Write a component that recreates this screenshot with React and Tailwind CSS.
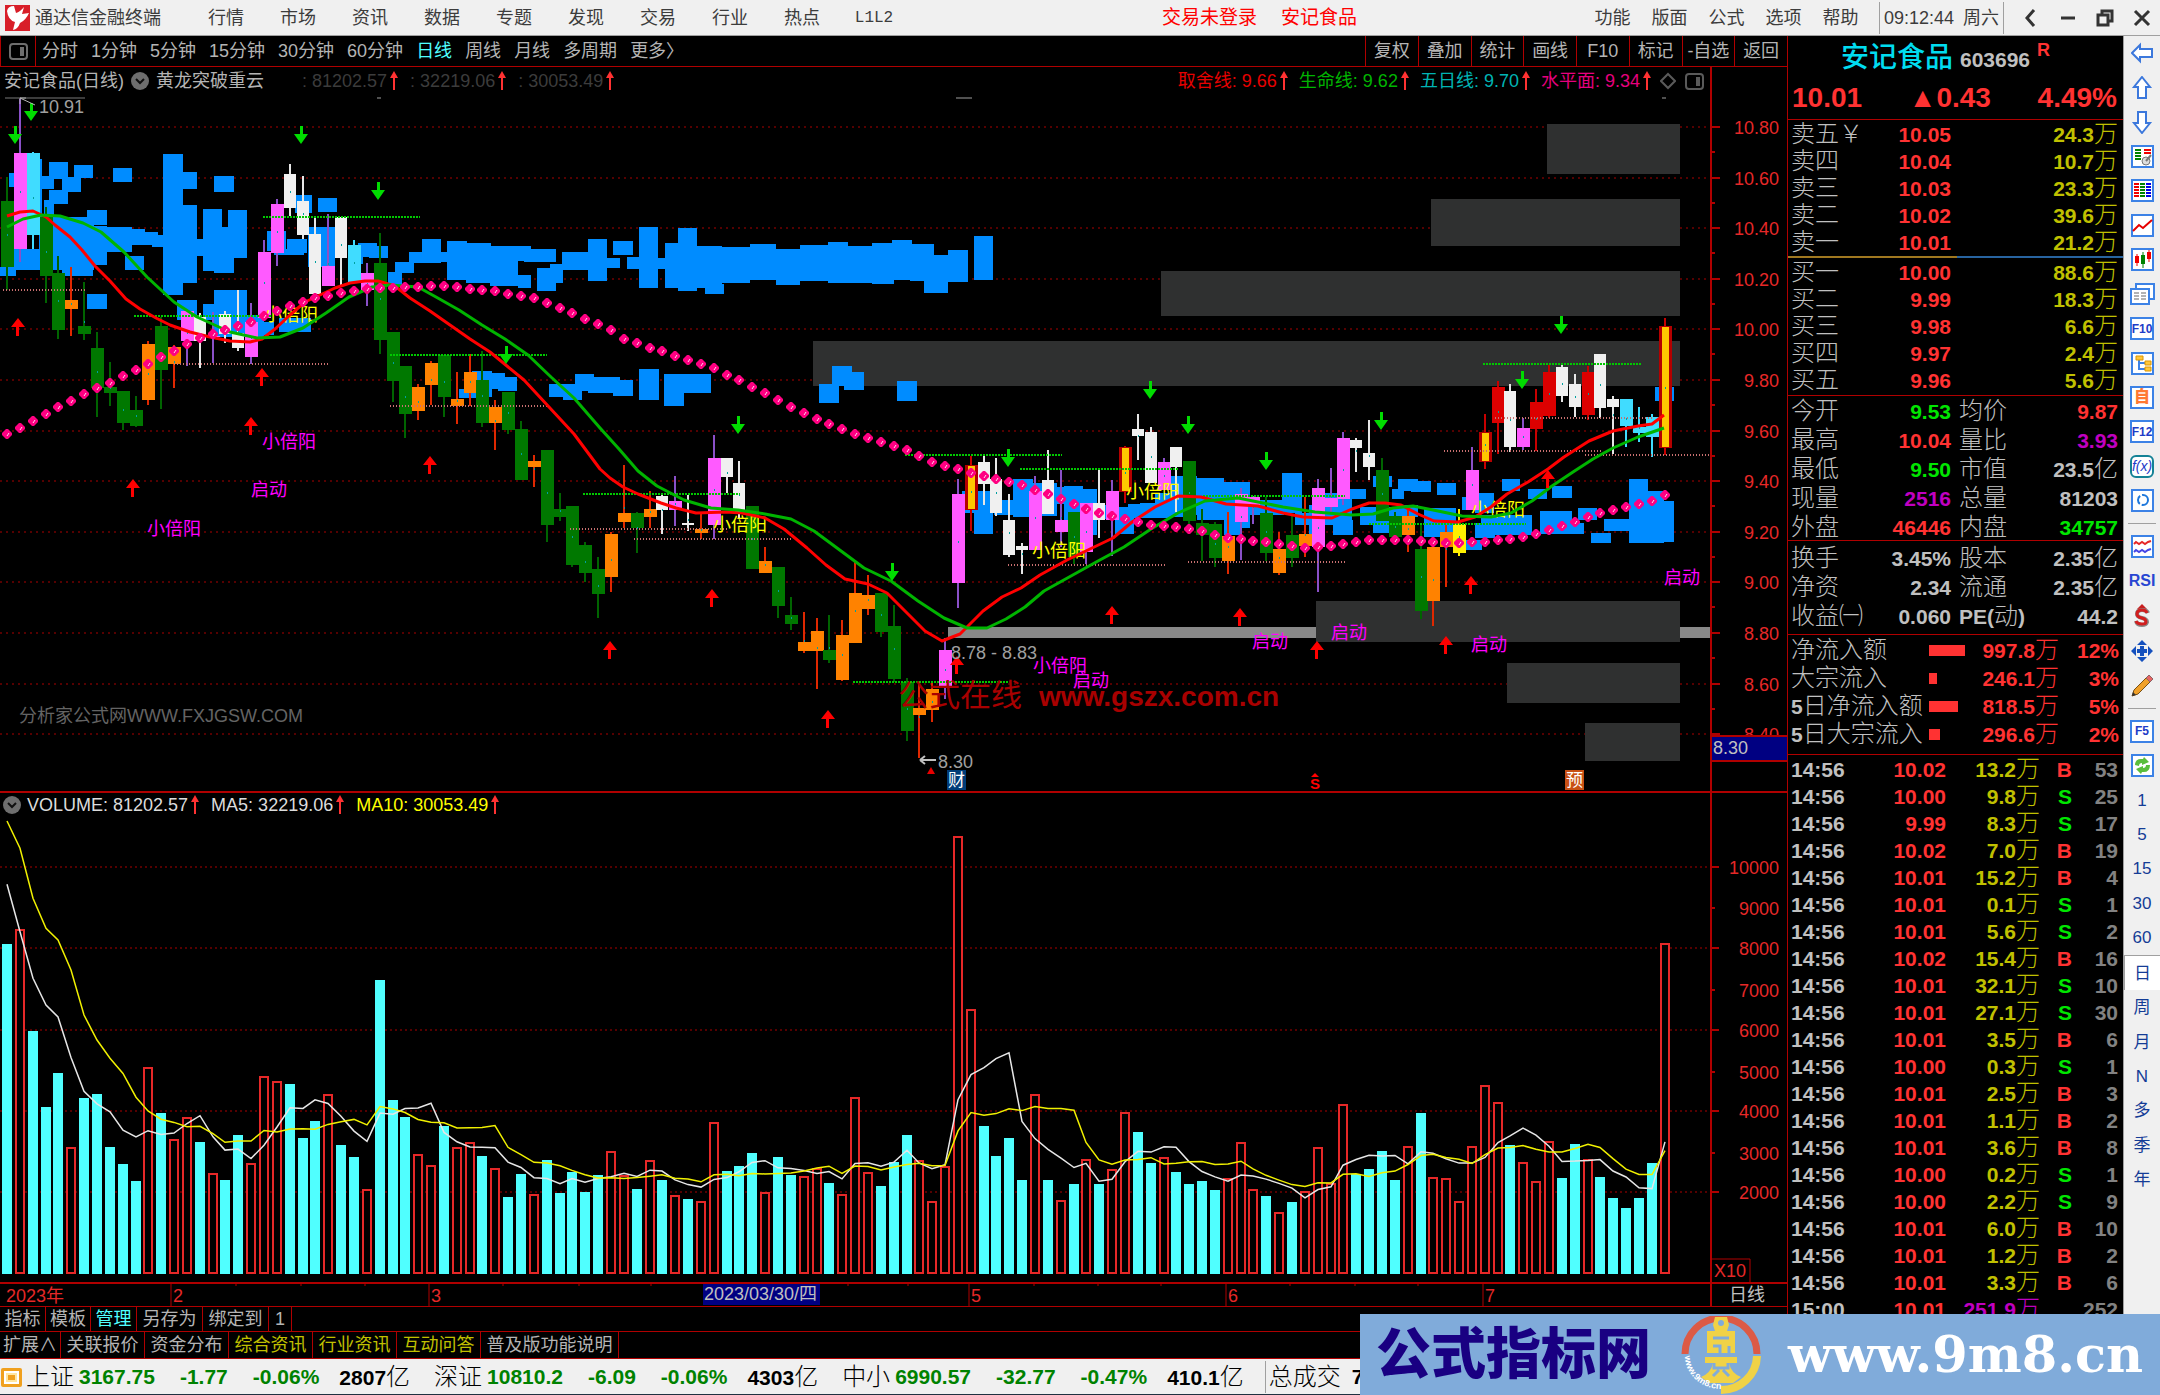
import React from "react";

const MENU = ["行情", "市场", "资讯", "数据", "专题", "发现", "交易", "行业", "热点", "L1L2"];
const MENU_RIGHT = ["功能", "版面", "公式", "选项", "帮助"];
const PERIODS = ["分时", "1分钟", "5分钟", "15分钟", "30分钟", "60分钟", "日线", "周线", "月线", "多周期", "更多〉"];
const TOOLS = ["复权", "叠加", "统计", "画线", "F10", "标记", "-自选", "返回"];

const SELL = [
  ["卖五￥", "10.05", "24.3万"],
  ["卖四", "10.04", "10.7万"],
  ["卖三", "10.03", "23.3万"],
  ["卖二", "10.02", "39.6万"],
  ["卖一", "10.01", "21.2万"],
];
const BUY = [
  ["买一", "10.00", "88.6万"],
  ["买二", "9.99", "18.3万"],
  ["买三", "9.98", "6.6万"],
  ["买四", "9.97", "2.4万"],
  ["买五", "9.96", "5.6万"],
];

const R = "text-[#ff3232]";
const G = "text-[#00e600]";
const M = "text-[#c000c0]";
const W = "text-[#c0c0c0]";

const STATS_A = [
  ["今开", "9.53", G, "均价", "9.87", R],
  ["最高", "10.04", R, "量比", "3.93", M],
  ["最低", "9.50", G, "市值", "23.5亿", W],
  ["现量", "2516", M, "总量", "81203", W],
  ["外盘", "46446", R, "内盘", "34757", G],
];
const STATS_B = [
  ["换手", "3.45%", W, "股本", "2.35亿", W],
  ["净资", "2.34", W, "流通", "2.35亿", W],
  ["收益㈠", "0.060", W, "PE(动)", "44.2", W],
];
const FLOWS = [
  ["净流入额", 36, "997.8万", "12%"],
  ["大宗流入", 8, "246.1万", "3%"],
  ["5日净流入额", 29, "818.5万", "5%"],
  ["5日大宗流入", 11, "296.6万", "2%"],
];
const TICKS = [
  ["14:56", "10.02", "13.2万", "B", 53],
  ["14:56", "10.00", "9.8万", "S", 25],
  ["14:56", "9.99", "8.3万", "S", 17],
  ["14:56", "10.02", "7.0万", "B", 19],
  ["14:56", "10.01", "15.2万", "B", 4],
  ["14:56", "10.01", "0.1万", "S", 1],
  ["14:56", "10.01", "5.6万", "S", 2],
  ["14:56", "10.02", "15.4万", "B", 16],
  ["14:56", "10.01", "32.1万", "S", 10],
  ["14:56", "10.01", "27.1万", "S", 30],
  ["14:56", "10.01", "3.5万", "B", 6],
  ["14:56", "10.00", "0.3万", "S", 1],
  ["14:56", "10.01", "2.5万", "B", 3],
  ["14:56", "10.01", "1.1万", "B", 2],
  ["14:56", "10.01", "3.6万", "B", 8],
  ["14:56", "10.00", "0.2万", "S", 1],
  ["14:56", "10.00", "2.2万", "S", 9],
  ["14:56", "10.01", "6.0万", "B", 10],
  ["14:56", "10.01", "1.2万", "B", 2],
  ["14:56", "10.01", "3.3万", "B", 6],
  ["15:00", "10.01", "251.9万", "", 252],
];

// kind, high, body top, body bottom, low
const CANDLES = [
  ["g", 177, 201, 267, 290], ["m", 98, 153, 249, 262], ["c", 152, 153, 235, 249], ["g", 207, 217, 276, 303],
  ["g", 256, 273, 330, 339], ["o", 267, 300, 309, 336], ["g", 282, 326, 334, 340], ["g", 332, 348, 388, 417],
  ["g", 362, 387, 393, 406], ["g", 391, 391, 423, 430], ["g", 396, 410, 426, 427], ["o", 341, 344, 400, 405],
  ["g", 317, 326, 370, 409], ["o", 345, 347, 364, 388], ["m", 311, 311, 341, 366], ["w", 313, 317, 341, 368],
  ["m", 312, 336, 337, 363], ["w", 311, 314, 334, 343], ["w", 290, 333, 348, 351], ["m", 303, 322, 357, 364],
  ["m", 240, 252, 318, 318], ["m", 199, 204, 253, 266], ["w", 164, 174, 208, 216], ["w", 176, 201, 235, 239],
  ["w", 217, 234, 294, 300], ["m", 214, 266, 286, 286], ["w", 217, 217, 258, 285], ["c", 240, 245, 282, 282],
  ["m", 263, 273, 290, 306], ["g", 233, 263, 340, 354], ["g", 332, 332, 381, 402], ["g", 366, 366, 414, 438],
  ["o", 384, 387, 411, 420], ["o", 361, 363, 385, 405], ["g", 355, 355, 397, 417], ["o", 372, 399, 406, 424],
  ["o", 354, 372, 393, 406], ["g", 351, 380, 423, 427], ["o", 400, 407, 423, 450], ["g", 392, 392, 430, 434],
  ["g", 421, 429, 480, 480], ["o", 455, 461, 467, 487], ["g", 450, 450, 525, 542], ["g", 493, 509, 517, 521],
  ["g", 506, 506, 565, 567], ["g", 542, 545, 573, 582], ["g", 557, 569, 594, 618], ["o", 532, 534, 577, 592],
  ["o", 465, 513, 522, 528], ["g", 512, 513, 528, 553], ["o", 491, 509, 517, 528], ["w", 495, 496, 510, 534],
  ["m", 476, 501, 510, 526], ["w", 495, 523, 525, 531], ["o", 514, 529, 533, 539], ["m", 435, 458, 525, 539],
  ["w", 458, 458, 477, 493], ["w", 461, 483, 512, 518], ["g", 506, 506, 569, 569], ["o", 547, 561, 573, 573],
  ["g", 567, 567, 606, 618], ["g", 597, 615, 624, 630], ["o", 612, 642, 651, 653], ["o", 618, 631, 651, 689],
  ["g", 615, 650, 660, 663], ["o", 620, 635, 680, 681], ["o", 562, 593, 643, 643], ["o", 575, 595, 609, 615],
  ["g", 593, 593, 632, 637], ["g", 605, 626, 679, 682], ["g", 678, 682, 731, 741], ["o", 682, 708, 715, 758],
  ["o", 683, 689, 710, 722], ["m", 638, 650, 687, 699], ["m", 479, 494, 583, 608], ["y", 456, 465, 510, 531],
  ["w", 456, 462, 484, 505], ["w", 458, 479, 513, 516], ["w", 494, 520, 555, 557], ["w", 543, 546, 550, 574],
  ["m", 476, 491, 550, 550], ["w", 450, 480, 514, 514], ["m", 470, 520, 532, 547], ["g", 512, 512, 557, 564],
  ["m", 503, 503, 552, 564], ["w", 469, 503, 520, 538], ["m", 480, 491, 520, 556], ["y", 446, 447, 492, 503],
  ["w", 414, 429, 436, 460], ["w", 427, 432, 483, 483], ["m", 458, 462, 490, 490], ["w", 447, 447, 467, 512],
  ["g", 461, 461, 521, 525], ["g", 509, 523, 535, 561], ["g", 522, 524, 558, 567], ["o", 512, 536, 561, 574],
  ["m", 488, 494, 522, 560], ["m", 496, 497, 506, 524], ["g", 497, 513, 553, 561], ["o", 532, 549, 573, 575],
  ["g", 514, 535, 558, 567], ["o", 497, 534, 546, 557], ["m", 479, 488, 547, 592], ["m", 468, 498, 507, 512],
  ["m", 432, 438, 499, 505], ["w", 438, 440, 448, 472], ["w", 420, 453, 467, 480], ["g", 458, 470, 521, 521],
  ["g", 512, 516, 537, 537], ["o", 508, 516, 535, 552], ["g", 524, 549, 611, 619], ["o", 543, 547, 601, 626],
  ["o", 525, 532, 547, 587], ["Y", 509, 524, 553, 556], ["m", 447, 470, 510, 510], ["y", 414, 432, 462, 469],
  ["r", 381, 387, 423, 454], ["w", 384, 391, 447, 452], ["m", 418, 428, 447, 450], ["r", 389, 402, 429, 451],
  ["r", 365, 372, 416, 418], ["w", 365, 367, 396, 402], ["w", 374, 384, 407, 417], ["r", 366, 372, 415, 420],
  ["w", 354, 354, 408, 418], ["w", 396, 399, 407, 454], ["c", 399, 399, 426, 447], ["c", 407, 427, 433, 442],
  ["c", 414, 417, 437, 457], ["y", 318, 326, 448, 455],
];
const BODY = { g: "#007800", m: "#ff5aff", w: "#f0f0f0", o: "#ff8200", c: "#40dcff", r: "#dc0000", y: "#ffc800", Y: "#fff000" };
const WICK = { g: "#006400", m: "#8a50c8", w: "#e6e6e6", o: "#e02800", c: "#40dcff", r: "#c80000", y: "#c80000", Y: "#fff000" };

// c = falling day (solid), r = rising day (outline); number is the bar top in thirds of a pixel
const VOLUMES =
  "c461 r418 c723 c952 c849 r1071 c925 c912 c1070 c1123 c1173 r832 c970 r1048 r980 c1056 r1148 c1169 c1034 r1120 r859 r873 c881 c1043 c993 r913 c1065 c1102 r1197 c570 c930 c980 r1093 r1126 c1007 r1071 r1057 c1097 r1135 c1222 c1151 r1211 c1110 c1210 c1147 c1205 c1156 r1084 r1156 c1196 r1111 c1169 r1216 c1227 r1234 r995 c1142 c1129 c1088 r1207 c1101 c1154 r1157 r1134 c1178 r1211 r922 r1147 c1187 c1115 c1034 r1111 r1233 r1129 r139 r657 c1007 c1097 c1043 c1169 r913 c1169 r1229 c1182 r1107 c1182 r1138 r967 c1025 c1119 r1102 c1146 c1182 c1173 c1200 r1165 r1057 r1196 c1218 r1265 c1236 r1202 r1071 r1178 r941 c1151 c1137 c1083 c1169 r1067 c970 r1161 r1165 r1234 r1067 r886 r937 c1065 r1116 r1174 r1052 c1164 c1061 r1107 c1160 c1223 c1254 c1223 c1119 r459"
    .split(" ")
    .map((s) => ({ up: s[0] === "r", y: 790 + Number(s.slice(1)) / 3 }));

// x, y, width, height
const CLOUD = [
  [9, 173, 7, 14], [37, 159, 5, 58], [49, 162, 19, 17], [42, 176, 12, 13], [74, 165, 19, 13], [62, 177, 19, 15],
  [49, 190, 19, 14], [44, 200, 10, 18], [113, 168, 19, 14], [163, 154, 20, 141], [183, 172, 14, 17], [214, 176, 20, 16],
  [87, 210, 20, 15], [183, 205, 14, 78], [196, 239, 7, 17], [203, 209, 19, 62], [214, 227, 20, 46], [228, 210, 19, 48],
  [0, 267, 16, 9], [9, 249, 30, 21], [39, 217, 55, 53], [62, 258, 31, 18], [93, 226, 14, 39], [100, 227, 32, 25],
  [125, 229, 20, 16], [144, 232, 14, 13], [152, 235, 12, 12], [125, 256, 19, 14], [87, 294, 20, 15], [177, 300, 20, 20],
  [203, 304, 12, 16], [214, 290, 33, 30], [214, 315, 50, 22], [257, 322, 17, 13], [267, 231, 19, 20], [295, 195, 17, 18],
  [318, 198, 19, 14], [308, 227, 27, 40], [274, 249, 30, 6], [287, 239, 20, 14], [358, 243, 19, 14], [369, 246, 19, 12],
  [348, 250, 15, 14], [279, 318, 32, 14],
  [388, 272, 14, 14], [395, 262, 19, 11], [409, 252, 19, 11], [422, 239, 19, 24], [440, 252, 8, 10], [447, 241, 20, 39],
  [466, 243, 25, 40], [490, 246, 28, 40], [518, 246, 13, 15], [518, 275, 13, 13], [524, 249, 32, 13], [537, 268, 19, 23],
  [550, 264, 13, 19], [562, 252, 27, 18], [588, 239, 19, 42], [601, 258, 19, 10], [613, 241, 20, 14], [627, 257, 13, 12],
  [639, 227, 19, 61], [658, 258, 7, 11], [665, 243, 15, 45], [678, 228, 19, 63], [697, 246, 25, 42], [705, 284, 19, 10],
  [720, 247, 30, 36], [750, 244, 26, 36], [776, 249, 24, 36], [800, 245, 28, 36], [828, 242, 20, 41], [846, 246, 28, 37],
  [872, 243, 22, 41], [892, 240, 20, 40], [910, 244, 24, 37], [924, 255, 24, 38], [948, 250, 20, 32], [974, 236, 19, 44],
  [459, 389, 17, 9], [472, 371, 20, 26], [485, 373, 20, 16], [498, 377, 19, 14], [549, 384, 33, 13], [563, 387, 19, 13],
  [575, 374, 19, 17], [588, 377, 32, 16], [613, 380, 20, 16], [639, 369, 20, 31], [664, 374, 20, 32], [684, 374, 27, 19],
  [692, 374, 19, 19], [819, 384, 20, 19], [832, 366, 20, 20], [844, 372, 20, 18], [897, 381, 20, 20],
  [962, 491, 32, 22], [974, 491, 19, 43], [994, 500, 22, 15], [1013, 479, 20, 38], [1033, 483, 24, 33], [1050, 487, 16, 17],
  [1064, 486, 19, 34], [1083, 489, 14, 46], [1097, 505, 17, 14], [1115, 507, 19, 27], [1119, 513, 47, 5], [1128, 504, 27, 13],
  [1155, 493, 16, 25], [1170, 476, 27, 39], [1140, 503, 46, 14], [1197, 478, 27, 42], [1224, 482, 26, 28], [1224, 483, 26, 45],
  [1204, 500, 80, 15], [1242, 505, 36, 9], [1282, 473, 20, 40], [1224, 523, 18, 12], [1295, 513, 37, 12], [1309, 505, 15, 40],
  [1324, 493, 28, 32], [1333, 520, 20, 15], [1350, 489, 16, 10], [1360, 507, 21, 18], [1373, 476, 19, 11], [1373, 507, 38, 26],
  [1392, 489, 12, 10], [1398, 479, 20, 12], [1411, 481, 20, 11], [1401, 505, 17, 12], [1424, 508, 32, 29], [1437, 483, 19, 12],
  [1462, 497, 17, 13], [1475, 493, 19, 20], [1502, 479, 18, 12], [1528, 489, 19, 10], [1552, 486, 20, 12], [1540, 511, 32, 23],
  [1481, 515, 51, 20], [1475, 523, 20, 15], [1466, 540, 16, 10], [1564, 523, 20, 11], [1578, 508, 19, 12], [1591, 533, 20, 10],
  [1604, 519, 26, 12], [1629, 479, 19, 64], [1648, 491, 16, 52], [1664, 501, 10, 41], [1655, 387, 19, 14],
];

const BLOCKS = [
  [1547, 124, 50], [1431, 199, 47], [1161, 271, 45], [813, 341, 45], [1316, 601, 41], [1507, 663, 40], [1585, 723, 38],
];

const RED_LINE =
  "7,216 20,212 33,211 46,217 55,225 70,237 82,250 95,266 110,281 126,299 140,309 156,318 170,325 190,332 210,337 230,341 250,342 262,339 275,329 290,315 305,302 320,295 335,288 350,283 365,281 378,281 395,286 410,298 430,311 450,325 470,339 490,352 507,366 524,380 549,407 574,434 600,469 610,478 623,487 638,494 661,503 676,508 696,513 726,512 742,513 765,518 784,529 807,548 826,565 845,579 868,584 887,593 906,612 925,631 942,641 960,634 983,611 1002,597 1021,588 1040,575 1067,560 1090,549 1113,538 1132,522 1155,507 1178,496 1201,497 1226,504 1258,506 1283,513 1303,517 1332,518 1352,509 1369,503 1385,503 1401,505 1418,514 1434,521 1458,522 1475,517 1491,507 1507,494 1528,482 1548,469 1564,457 1589,441 1613,431 1638,426 1652,424 1664,415";
const GREEN_LINE =
  "7,227 23,219 41,215 60,216 83,223 101,232 124,252 147,277 174,302 197,317 230,332 257,338 280,337 303,328 326,313 349,297 372,287 390,285 418,287 436,297 459,310 482,325 505,339 528,355 551,377 574,398 600,428 619,449 638,471 657,486 684,500 711,508 738,510 765,514 791,519 814,531 837,548 864,568 891,581 918,601 944,618 967,628 987,628 1006,619 1025,607 1044,591 1071,576 1098,561 1124,547 1151,529 1178,513 1205,501 1238,498 1258,502 1283,507 1315,512 1352,515 1373,514 1393,508 1413,506 1438,511 1462,516 1491,517 1511,513 1532,501 1552,486 1573,472 1593,459 1613,448 1638,437 1664,428";
const LEVEL = [
  [6, 435], [57, 408], [96, 388], [109, 383], [161, 357], [198, 339], [251, 322], [276, 311], [314, 298], [366, 289], [404, 287],
  [443, 286], [494, 291], [533, 298], [558, 307], [597, 324], [611, 330], [623, 339], [661, 351], [713, 368], [751, 386],
  [791, 407], [828, 424], [867, 438], [906, 450], [931, 462], [957, 469], [983, 476], [1022, 485], [1047, 494], [1073, 504],
  [1099, 513], [1124, 519], [1151, 525], [1176, 527], [1202, 531], [1227, 538], [1266, 542], [1303, 548], [1330, 546],
  [1369, 540], [1407, 540], [1432, 542], [1458, 543], [1484, 542], [1510, 539], [1536, 534], [1549, 530], [1574, 522],
  [1600, 513], [1626, 507], [1651, 501], [1665, 495],
];

const GREEN_DOTS = [
  [263, 420, 217], [134, 271, 316], [390, 547, 355], [583, 740, 494], [853, 1011, 682], [905, 1062, 455], [1020, 1178, 469],
  [1203, 1345, 496], [1369, 1526, 524], [1483, 1641, 364],
];
const PINK_DOTS = [
  [3, 85, 290], [174, 330, 364], [390, 548, 406], [570, 728, 529], [634, 791, 539], [1008, 1166, 565], [1188, 1345, 562],
  [1495, 1652, 418], [1444, 1602, 451], [1585, 1711, 455],
];
const DOWN = [
  [31, 103], [15, 126], [301, 126], [378, 182], [506, 346], [738, 416], [892, 563], [1008, 449], [1150, 381], [1188, 416],
  [1266, 452], [1381, 412], [1522, 371], [1561, 316],
];
const UP = [
  [18, 318], [262, 368], [251, 417], [133, 479], [430, 456], [610, 641], [712, 589], [828, 710], [957, 656], [1112, 606],
  [1240, 608], [1317, 641], [1446, 636], [1471, 576], [1548, 470],
];
const MARKS = [
  [264, 321, "小倍阳", "#ffff00"], [713, 531, "小倍阳", "#ffff00"], [1032, 557, "小倍阳", "#ffff00"], [1126, 498, "小倍阳", "#ffff00"],
  [1471, 516, "小倍阳", "#ffff00"], [262, 448, "小倍阳", "#ff00ff"], [147, 535, "小倍阳", "#ff00ff"], [1033, 672, "小倍阳", "#ff00ff"],
  [251, 496, "启动", "#ff00ff"], [1073, 687, "启动", "#ff00ff"], [1252, 648, "启动", "#ff00ff"], [1331, 639, "启动", "#ff00ff"],
  [1471, 651, "启动", "#ff00ff"], [1664, 584, "启动", "#ff00ff"],
];
const PRICES = ["10.80", "10.60", "10.40", "10.20", "10.00", "9.80", "9.60", "9.40", "9.20", "9.00", "8.80", "8.60", "8.40"];

const barX = (i) => Math.round(7 + i * 12.85);
const priceY = (i) => Math.round(127 + i * 50.6);

function levelAt(x) {
  for (let i = 1; i < LEVEL.length; i++) {
    const [x0, y0] = LEVEL[i - 1];
    const [x1, y1] = LEVEL[i];
    if (x <= x1) return Math.round(y0 + ((y1 - y0) * (x - x0)) / (x1 - x0));
  }
  return LEVEL[LEVEL.length - 1][1];
}

function average(n, head) {
  return VOLUMES.map((v, i) => {
    const y = i < n - 1 ? 790 + head[i] / 3 : VOLUMES.slice(i - n + 1, i + 1).reduce((s, b) => s + b.y, 0) / n;
    return `${barX(i)},${y.toFixed(1)}`;
  }).join(" ");
}

/* Digits are bold, a trailing unit (万, 亿) is larger and light */
const Num = ({ v }) => {
  const unit = /[万亿]$/.test(v) ? v.slice(-1) : "";
  return (
    <>
      <b className="text-[21px] font-bold leading-none">{unit ? v.slice(0, -1) : v}</b>
      {unit && <span className="leading-none">{unit}</span>}
    </>
  );
};

const Rise = () => (
  <svg className="ml-[3px] h-5 w-2 shrink-0" viewBox="0 0 8 20">
    <path d="M4 0 L8 7 H0 Z" fill="#ff3232" />
    <path d="M4 5 V19" stroke="#ff3232" strokeWidth="2" />
  </svg>
);

const Toggle = () => (
  <button aria-label="展开" className="flex h-[18px] w-[18px] shrink-0 items-center justify-center rounded-full bg-[#6e6e6e]">
    <svg width="12" height="12" viewBox="0 0 12 12">
      <path d="M2 4 L6 8 L10 4" fill="none" stroke="#101010" strokeWidth="2" />
    </svg>
  </button>
);

const PanelIcon = ({ color }) => (
  <svg width="19" height="17" viewBox="0 0 19 17">
    <rect x="1" y="1" width="17" height="15" rx="3" fill="none" stroke={color} strokeWidth="2" />
    <rect x="11" y="4" width="4" height="9" fill={color} />
  </svg>
);

const MenuBar = () => (
  <header className="flex h-9 items-center border-b border-[#a0a0a0] bg-[#f0f0f0] text-lg text-[#3c3c3c]">
    <svg className="ml-[5px] h-[26px] w-[25px]" viewBox="0 0 25 26">
      <rect width="25" height="26" fill="#d81e28" />
      <path d="M2 6 Q3 1 9 1 L11 8 Q15 7 19 2 L17 9 L24 8 Q21 15 15 18 Q13 24 8 25 L10 17 Q3 15 2 6 Z" fill="#fff" />
    </svg>
    <h1 className="ml-[5px] shrink-0">通达信金融终端</h1>
    <nav className="ml-[29px] flex">
      {MENU.map((m) => (
        <button key={m} className={m === "L1L2" ? "w-[72px] font-['Liberation_Mono',monospace] text-base" : "w-[72px]"}>
          {m}
        </button>
      ))}
    </nav>
    <div className="flex-1" />
    <div className="ml-[25px] flex gap-6 text-[19px] text-[#ff0000]">
      <button>交易未登录</button>
      <button>安记食品</button>
    </div>
    <div className="flex-1" />
    <nav className="flex">
      {MENU_RIGHT.map((m) => (
        <button key={m} className="w-[57px]">
          {m}
        </button>
      ))}
    </nav>
    <div className="ml-[10px] flex h-8 w-[125px] items-center justify-center gap-[9px] border-x border-[#a0a0a0]">
      <time>09:12:44</time>
      <span>周六</span>
    </div>
    <div className="ml-[8px] flex">
      <button aria-label="收起" className="flex w-[37px] justify-center">
        <svg width="18" height="18" viewBox="0 0 18 18">
          <path d="M12 1 L5 9 L12 17" fill="none" stroke="#333" strokeWidth="3" />
        </svg>
      </button>
      <button aria-label="最小化" className="flex w-[37px] justify-center">
        <svg width="18" height="18" viewBox="0 0 18 18">
          <path d="M2 9 H16" stroke="#333" strokeWidth="3" />
        </svg>
      </button>
      <button aria-label="还原" className="flex w-[37px] justify-center">
        <svg width="18" height="18" viewBox="0 0 18 18" fill="none" stroke="#333" strokeWidth="3">
          <path d="M2 6 H12 V16 H2 Z M6 6 V2 H16 V12 H12" />
        </svg>
      </button>
      <button aria-label="关闭" className="flex w-[37px] justify-center">
        <svg width="18" height="18" viewBox="0 0 18 18">
          <path d="M2 2 L16 16 M16 2 L2 16" stroke="#333" strokeWidth="3" />
        </svg>
      </button>
    </div>
  </header>
);

const PeriodBar = () => (
  <div className="flex h-[31px] items-center border-b border-[#b00000] text-lg text-[#b4b4b4]">
    <button aria-label="面板" className="flex h-full w-9 shrink-0 items-center justify-center border-x border-[#b00000]">
      <PanelIcon color="#6e6e6e" />
    </button>
    <div className="ml-[6px] flex gap-[13px] whitespace-nowrap">
      {PERIODS.map((p) => (
        <button key={p} className={p === "日线" ? "text-[#50ffff]" : ""}>
          {p}
        </button>
      ))}
    </div>
    <div className="ml-auto flex h-full w-[422px]">
      {TOOLS.map((t) => (
        <button key={t} className="flex-1 whitespace-nowrap border-l border-[#b00000]">
          {t}
        </button>
      ))}
    </div>
  </div>
);

const Dim = ({ v }) => (
  <span className="mr-3 flex items-center text-[#3c3c3c]">
    : {v}
    <Rise />
  </span>
);

const PriceHeader = () => (
  <div className="flex h-7 whitespace-nowrap text-lg text-[#b4b4b4]">
    <div className="flex flex-1 items-center pl-1">
      <h2>安记食品(日线)</h2>
      <span className="mx-[7px] flex">
        <Toggle />
      </span>
      <span className="mr-[38px]">黄龙突破重云</span>
      <Dim v="81202.57" />
      <Dim v="32219.06" />
      <Dim v="30053.49" />
      <div className="ml-auto flex items-center gap-[11px]">
        <span className="flex items-center text-[#e60000]">取舍线: 9.66<Rise /></span>
        <span className="flex items-center text-[#00b400]">生命线: 9.62<Rise /></span>
        <span className="flex items-center text-[#00b4b4]">五日线: 9.70<Rise /></span>
        <span className="flex items-center text-[#e6007e]">水平面: 9.34<Rise /></span>
      </div>
      <svg className="mx-[9px] h-[18px] w-4" viewBox="0 0 16 18">
        <path d="M8 2 L15 9 L8 16 L1 9 Z" fill="none" stroke="#5a5a5a" strokeWidth="2" />
      </svg>
      <span className="mr-[6px]">
        <PanelIcon color="#5a5a5a" />
      </span>
    </div>
    <div className="w-[77px] border-l-2 border-[#b00000]" />
  </div>
);

const PriceChart = () => (
  <svg className="block h-auto w-full" viewBox="0 95 1787 696" fontSize="18">
    {/* grid */}
    {PRICES.map((p, i) => (
      <g key={p}>
        <path d={`M0 ${priceY(i)} H1710`} stroke="#aa0000" strokeWidth="1" strokeDasharray="2 4" />
        <path d={`M1711 ${priceY(i)} h9`} stroke="#b00000" strokeWidth="2" />
        {i < 12 && <path d={`M1711 ${priceY(i) + 25} h4`} stroke="#b00000" strokeWidth="2" />}
        <text x="1779" y={priceY(i) + 7} textAnchor="end" fill="#e62828">
          {p}
        </text>
      </g>
    ))}
    <rect x="948" y="627" width="762" height="11" fill="#888" />
    {BLOCKS.map(([x, y, h]) => (
      <rect key={y} x={x} y={y} width={1680 - x} height={h} fill="#2f3030" />
    ))}
    <g fill="#008cff" shapeRendering="crispEdges">
      {CLOUD.map(([x, y, w, h], i) => (
        <rect key={i} x={x} y={y} width={w} height={h} />
      ))}
    </g>

    <g shapeRendering="crispEdges">
      {CANDLES.map(([k, high, top, bottom, low], i) => {
        const x = barX(i);
        return (
          <g key={i}>
            <rect x={x - 1} y={high} width="2" height={low - high} fill={WICK[k]} />
            {k === "y" ? (
              <>
                <rect x={x - 6} y={top} width="13" height={bottom - top} fill="#b40000" />
                <rect x={x - 3} y={top + 1} width="7" height={bottom - top - 2} fill={BODY.y} />
              </>
            ) : (
              <rect x={x - 6} y={top} width={k === "w" ? 12 : 13} height={bottom - top} fill={BODY[k]} />
            )}
            <rect x={x} y={Math.round((top + bottom + high + low) / 4)} width="1" height="2" fill="#00a0a0" />
          </g>
        );
      })}
    </g>

    {GREEN_DOTS.map(([a, b, y], i) => (
      <path key={i} d={`M${a} ${y} H${b}`} stroke="#00c800" strokeWidth="2" strokeDasharray="2 1" />
    ))}
    {PINK_DOTS.map(([a, b, y], i) => (
      <path key={i} d={`M${a} ${y} H${b}`} stroke="#c87070" strokeWidth="2" strokeDasharray="1 2" />
    ))}

    {MARKS.map(([x, y, t, fill], i) => (
      <text key={i} x={x} y={y} fill={fill}>
        {t}
      </text>
    ))}
    <polyline points={RED_LINE} fill="none" stroke="#ff0000" strokeWidth="3" strokeLinejoin="round" />
    <polyline points={GREEN_LINE} fill="none" stroke="#00b400" strokeWidth="3" strokeLinejoin="round" />
    {CANDLES.map((_, i) => {
      const x = barX(i);
      const y = levelAt(x);
      return (
        <g key={i}>
          <path d={`M${x - 1} ${y - 5} h2 l4 4 v2 l-4 4 h-2 l-4 -4 v-2 Z`} fill="#ff0082" />
          <path d={`M${x} ${y + 2} l2 -3`} stroke="#ffdcf0" strokeWidth="1" />
        </g>
      );
    })}

    {DOWN.map(([x, y], i) => (
      <path key={i} d={`M${x - 1} ${y} h3 v8 h5 l-7 10 l-7 -10 h6 Z`} fill="#00dc00" />
    ))}
    {UP.map(([x, y], i) => (
      <path key={i} d={`M${x} ${y} l7 9 h-6 v9 h-3 v-9 h-5 Z`} fill="#ff0000" />
    ))}
    <path d="M931 767 l4 7 h-8 Z" fill="#e60000" />

    {/* high and low of the range */}
    <path d="M5 98 H85" stroke="#3c3c3c" strokeWidth="2" />
    <path d="M956 98 H972 M377 98 h4 M1662 98 h4" stroke="#505050" strokeWidth="2" />
    <path d="M20 98 L35 105 M20 98 h6 M20 98 v6" stroke="#b4b4b4" fill="none" />
    <path d="M920 760 H936 M920 760 l5 -4 M920 760 l5 4" stroke="#c0c0c0" strokeWidth="2" fill="none" />
    <g fill="#a0a0a0">
      <text x="39" y="113">10.91</text>
      <text x="951" y="659">8.78 - 8.83</text>
      <text x="938" y="768">8.30</text>
    </g>
    <text x="19" y="722" fill="#646464">分析家公式网WWW.FXJGSW.COM</text>
    <text x="898" y="706" fontSize="31" fill="#a80000">公式在线</text>
    <text x="1039" y="706" fontSize="28" fontWeight="bold" fill="#a80000">www.gszx.com.cn</text>

    <rect x="947" y="770" width="19" height="20" fill="#003c78" />
    <text x="948" y="786" fontSize="17" fill="#fff">财</text>
    <rect x="1565" y="770" width="19" height="20" fill="#c85014" />
    <text x="1566" y="786" fontSize="17" fill="#fff">预</text>
    <path d="M1315 773 l4 4 h-8 Z" fill="#ff0000" />
    <text x="1310" y="789" fontSize="15" fontWeight="bold" fill="#ff0000">S</text>

    {/* axis */}
    <path d="M1711 95 V791" stroke="#b00000" strokeWidth="2" />
    <rect x="1712" y="737" width="75" height="23" fill="#000082" />
    <path d="M1711 736 H1787 M1711 761 H1787" stroke="#b00000" strokeWidth="2" />
    <text x="1713" y="754" fill="#c0c0c0">8.30</text>
  </svg>
);

const VolumeHeader = () => (
  <div className="flex h-[25px] whitespace-nowrap border-t-2 border-[#b00000] text-lg text-[#dcdcdc]">
    <div className="flex flex-1 items-center pl-[3px]">
      <Toggle />
      <span className="ml-[6px] flex items-center">VOLUME: 81202.57<Rise /></span>
      <span className="ml-3 flex items-center">MA5: 32219.06<Rise /></span>
      <span className="ml-3 flex items-center text-[#ffff00]">MA10: 30053.49<Rise /></span>
    </div>
    <div className="w-[77px] border-l-2 border-[#b00000]" />
  </div>
);

const VOLUME_LABELS = [
  [10000, 867], [9000, 908], [8000, 948], [7000, 990], [6000, 1030], [5000, 1072], [4000, 1111], [3000, 1153], [2000, 1192],
];

const VolumeChart = () => (
  <svg className="block h-auto w-full" viewBox="0 816 1787 466" fontSize="18">
    {VOLUME_LABELS.map(([v, y], i) => (
      <g key={v}>
        {i % 2 === 0 && <path d={`M0 ${y} H1710`} stroke="#aa0000" strokeDasharray="2 3" />}
        <path d={i % 2 ? `M1711 ${y} h4` : `M1711 ${y} h8`} stroke="#b00000" strokeWidth="2" />
        <text x="1779" y={y + 7} textAnchor="end" fill="#e62828">
          {v}
        </text>
      </g>
    ))}
    <g shapeRendering="crispEdges">
      {VOLUMES.map(({ up, y }, i) => {
        const top = Math.round(y);
        return up ? (
          <rect key={i} x={barX(i) - 4} y={top + 1} width="8" height={1272 - top} fill="#000" stroke="#e62828" strokeWidth="2" />
        ) : (
          <rect key={i} x={barX(i) - 5} y={top} width="10" height={1274 - top} fill="#50ffff" />
        );
      })}
    </g>
    <polyline points={average(5, [283, 425, 565, 645])} fill="none" stroke="#e6e6e6" strokeWidth="1.5" />
    <polyline points={average(10, [93, 175, 325, 415, 450, 540, 675, 750, 805])} fill="none" stroke="#f0f000" strokeWidth="1.5" />
    <path d="M1711 816 V1282" stroke="#b00000" strokeWidth="2" />
    <path d="M1711 1259 H1750 V1282" fill="none" stroke="#b00000" strokeWidth="1" />
    <text x="1714" y="1277" fill="#e62828">X10</text>
  </svg>
);

const MONTHS = [[171, "2"], [429, "3"], [969, "5"], [1226, "6"], [1483, "7"]];
const WEEKS = [236, 301, 365, 503, 579, 651, 848, 908, 1034, 1098, 1161, 1290, 1355, 1418];

const DateAxis = () => (
  <svg className="block h-auto w-full" viewBox="0 1282 1787 24" fontSize="18">
    <path d="M0 1283 H1787 M1711 1283 V1306" stroke="#b00000" strokeWidth="2" />
    <text x="6" y="1302" fill="#e62828">2023年</text>
    {MONTHS.map(([x, m]) => (
      <g key={m}>
        <path d={`M${x} 1283 V1306`} stroke="#b00000" strokeWidth="1" />
        <text x={x + 2} y="1302" fill="#e62828">
          {m}
        </text>
      </g>
    ))}
    {WEEKS.map((x) => (
      <path key={x} d={`M${x} 1283 v3`} stroke="#b00000" strokeWidth="1" />
    ))}
    <rect x="703" y="1284" width="117" height="21" fill="#000082" />
    <text x="704" y="1300" fill="#c0c0c0">2023/03/30/四</text>
    <text x="1747" y="1301" textAnchor="middle" fill="#c0c0c0">日线</text>
  </svg>
);

const TABS = [
  ["指标", "w-[46px]"], ["模板", "w-[45px]"], ["管理", "w-[46px] text-[#50ffff]"], ["另存为", "w-[66px]"], ["绑定到", "w-[66px]"], ["1", "w-[23px]"],
];
const LINKS = [
  ["扩展∧", "w-[61px]"], ["关联报价", "w-[84px]"], ["资金分布", "w-[84px]"], ["综合资讯", "w-[84px] text-[#c0c000]"],
  ["行业资讯", "w-[84px] text-[#c0c000]"], ["互动问答", "w-[84px] text-[#c0c000]"], ["普及版功能说明", "w-[138px]"],
];

const BottomTabs = () => (
  <div className="whitespace-nowrap text-lg text-[#b4b4b4]">
    <div className="flex h-[25px] border-t border-[#b00000]">
      {TABS.map(([t, cls]) => (
        <button key={t} className={"border-r border-[#b00000] leading-6 " + cls}>
          {t}
        </button>
      ))}
    </div>
    <div className="flex h-7 border-y border-[#b00000]">
      {LINKS.map(([t, cls]) => (
        <button key={t} className={"border-r border-[#b00000] leading-[26px] " + cls}>
          {t}
        </button>
      ))}
    </div>
  </div>
);

const OrderRows = ({ rows }) => (
  <table className="w-full table-fixed leading-[26px]">
    <tbody>
      {rows.map(([label, price, vol]) => (
        <tr key={label} className="h-[27px]">
          <th scope="row" className="w-[83px] whitespace-nowrap pl-[3px] text-left font-light">{label}</th>
          <td className="w-20 text-right text-[#ff3232]">
            <Num v={price} />
          </td>
          <td className="pr-[5px] text-right text-[#c0c000]">
            <Num v={vol} />
          </td>
        </tr>
      ))}
    </tbody>
  </table>
);

const StatRows = ({ rows }) => (
  <table className="w-full table-fixed leading-[26px]">
    <tbody>
      {rows.map(([l1, v1, c1, l2, v2, c2]) => (
        <tr key={l1} className="h-[29px]">
          <th scope="row" className="w-[83px] whitespace-nowrap pl-[3px] text-left font-light">{l1}</th>
          <td className={"w-20 text-right " + c1}>
            <Num v={v1} />
          </td>
          <th scope="row" className="w-[82px] whitespace-nowrap pl-2 text-left font-light">
            {l2.startsWith("PE") ? <><b className="text-[21px] font-bold leading-none">PE(</b>动<b className="text-[21px] font-bold leading-none">)</b></> : l2}
          </th>
          <td className={"pr-[5px] text-right " + c2}>
            <Num v={v2} />
          </td>
        </tr>
      ))}
    </tbody>
  </table>
);

const QuotePanel = () => (
  <aside className="w-[336px] shrink-0 border-l border-[#b00000] text-2xl font-light text-[#c0c0c0]">
    <div className="flex h-[84px] flex-col border-b border-[#b00000]">
      <div className="flex h-11 items-center justify-center gap-[7px] pr-5">
        <h2 className="text-[28px] font-medium text-[#00dcf0]">安记食品</h2>
        <b className="pt-1 text-[21px] font-bold">603696</b>
        <b className="self-start pt-1 text-lg font-bold leading-5 text-[#ff3232]">R</b>
      </div>
      <div className="flex h-9 items-center justify-between pl-1 pr-[6px] text-[28px] font-bold text-[#ff3232]">
        <span>10.01</span>
        <span>▲0.43</span>
        <span>4.49%</span>
      </div>
    </div>
    <OrderRows rows={SELL} />
    <div className="mt-px flex h-[2px]">
      <div className="w-[169px] bg-[#a07820]" />
      <div className="flex-1 bg-[#2864a0]" />
    </div>
    <div className="border-b border-[#b00000] pb-[2px]">
      <OrderRows rows={BUY} />
    </div>
    <div className="h-[145px] overflow-hidden border-b border-[#b00000]">
      <StatRows rows={STATS_A} />
    </div>
    <div className="h-[94px] border-b border-[#b00000] pt-[2px]">
      <StatRows rows={STATS_B} />
    </div>
    <div className="h-[120px] border-b border-[#b00000] pt-px">
      <table className="w-full table-fixed leading-[26px]">
        <tbody>
          {FLOWS.map(([label, w, v, pct]) => (
            <tr key={label} className="h-[28px] text-[#ff3232]">
              <th scope="row" className="w-[141px] whitespace-nowrap pl-[3px] text-left font-light text-[#c0c0c0]">
                {label.startsWith("5") ? <><b className="text-[21px] font-bold leading-none">5</b>{label.slice(1)}</> : label}
              </th>
              <td className="w-10">
                <div className="h-[11px] bg-[#ff3232]" style={{ width: w }} />
              </td>
              <td className="w-[90px] text-right">
                <Num v={v} />
              </td>
              <td className="pr-1 text-right">
                <Num v={pct} />
              </td>
            </tr>
          ))}
        </tbody>
      </table>
    </div>
    <table className="w-full table-fixed leading-[26px]">
      <tbody>
        {TICKS.map(([t, p, v, side, n], i) => (
          <tr key={i} className="h-[27px] text-right">
            <td className="w-[68px] pl-[3px] text-left">
              <Num v={t} />
            </td>
            <td className="w-[90px] text-[#ff3232]">
              <Num v={p} />
            </td>
            <td className={side ? "w-[94px] text-[#c0c000]" : "w-[94px] text-[#c000c0]"}>
              <Num v={v} />
            </td>
            <td className={side === "B" ? "w-8 text-[#ff3232]" : "w-8 text-[#00e600]"}>
              <Num v={side} />
            </td>
            <td className="pr-[5px] text-[#828282]">
              <Num v={String(n)} />
            </td>
          </tr>
        ))}
      </tbody>
    </table>
  </aside>
);

const Frame = ({ children }) => (
  <svg width="23" height="23" viewBox="0 0 23 23" fill="none">
    <rect x="1" y="1" width="21" height="21" fill="#fff" stroke="#3c82e6" strokeWidth="2" />
    {children}
  </svg>
);

const Tag = ({ children }) => (
  <span className="flex h-[23px] w-6 items-center justify-center border-2 border-[#3c82e6] bg-white text-xs font-bold leading-none text-[#1e3cc8]">
    {children}
  </span>
);

const Arrow = ({ d }) => (
  <svg width="22" height="24" viewBox="0 0 22 24">
    <path d={d} fill="#fff" stroke="#3c78dc" strokeWidth="2" />
  </svg>
);

const ICONS_TOP = [
  ["后退", <Arrow d="M1 12 L9 4 V8 H21 V16 H9 V20 Z" />],
  ["上", <Arrow d="M11 1 L19 11 H15 V22 H7 V11 H3 Z" />],
  ["下", <Arrow d="M11 23 L19 13 H15 V2 H7 V13 H3 Z" />],
  ["报价设置", <Frame><path d="M4 5 h6 M4 8 h6 M4 11 h6 M4 14 h6" stroke="#008200" strokeWidth="2" /><path d="M13 5 h7 M13 8 h7" stroke="#f00000" strokeWidth="2" /><circle cx="15" cy="16" r="4" fill="#ddd" stroke="#777" /><path d="M15 16 L20 10" stroke="#777" strokeWidth="2" /></Frame>],
  ["行情列表", <Frame><path d="M3 5 h5 M3 8 h5 M3 11 h5 M3 14 h5 M3 17 h5" stroke="#f00000" strokeWidth="2" /><path d="M9 5 h5 M9 8 h5 M9 11 h5 M9 14 h5 M9 17 h5" stroke="#008200" strokeWidth="2" /><path d="M15 5 h5 M15 8 h5 M15 11 h5 M15 14 h5 M15 17 h5" stroke="#0000e6" strokeWidth="2" /></Frame>],
  ["分时图", <Frame><path d="M2 17 L8 11 L12 14 L21 6" stroke="#e60000" strokeWidth="2" /></Frame>],
  ["K线图", <Frame><path d="M6 6 v12 M18 2 v12" stroke="#f00000" /><path d="M12 4 v16" stroke="#008200" /><path d="M4 8 h4 v7 h-4 Z M16 4 h4 v7 h-4 Z" fill="#f00000" /><path d="M10 7 h4 v9 h-4 Z" fill="#008200" /></Frame>],
  ["资料", <svg width="25" height="23" viewBox="0 0 25 23" fill="#fff"><path d="M6 1 H24 V16 H6 Z" stroke="#3c82e6" strokeWidth="2" /><path d="M1 6 H19 V21 H1 Z" stroke="#3c82e6" strokeWidth="2" /><path d="M4 10 h5 M11 10 h5 M4 13 h5 M11 13 h5 M4 16 h5 M11 16 h5" stroke="#666" strokeWidth="1" /></svg>],
  ["F10", <Tag>F10</Tag>],
  ["板块", <Frame><path d="M8 7 V17 H14 M8 11 H14" stroke="#3c82e6" strokeWidth="2" /><path d="M5 4 h7 v4 h-7 Z M14 9 h6 v4 h-6 Z M14 15 h6 v4 h-6 Z" fill="#ffc83c" stroke="#dc9600" /></Frame>],
  ["自选", <Tag><b className="text-base leading-none text-[#ff7832]">自</b></Tag>],
  ["F12", <Tag>F12</Tag>],
  ["公式", <span className="flex h-[23px] w-6 items-center justify-center rounded-md border-2 border-[#148296] bg-white text-sm italic leading-none text-[#1e3cc8]">f(x)</span>],
  ["周期", <Frame><circle cx="12" cy="11" r="5" stroke="#1e78dc" strokeWidth="2" strokeDasharray="9 2" /></Frame>],
];
const ICONS_MID = [
  ["多指标", <Frame><path d="M3 9 l2 -2 l3 2 l3 -2 l3 2 l3 -2 l3 -1" stroke="#e62828" strokeWidth="2" /><path d="M3 17 l2 -2 l3 2 l3 -2 l3 2 l3 -2 l3 -1" stroke="#4646e6" strokeWidth="2" /></Frame>],
  ["RSI", <b className="text-base font-bold text-[#2846d2]">RSI</b>],
  ["信号", <svg width="22" height="24" viewBox="0 0 22 24"><path d="M11 0 l5 5 h-10 Z" fill="#c81e1e" /><path d="M17 9 Q16 6 11 6 Q6 6 6 10 Q6 13 11 14 Q16 15 16 18 Q15 21 11 21 Q6 21 5 17" fill="none" stroke="#888" strokeWidth="4" /><path d="M16 9 Q15 6 11 6 Q6 6 6 10 Q6 13 11 14 Q15 15 15 18 Q15 20 11 20 Q6 20 5 17" fill="none" stroke="#d21e1e" strokeWidth="3" /></svg>],
  ["移动", <svg width="24" height="24" viewBox="0 0 24 24" fill="#1450be"><path d="M12 1 l5 5 h-10 Z M12 23 l5 -5 h-10 Z M1 12 l5 -5 v10 Z M23 12 l-5 -5 v10 Z M10 7 h4 v3 h3 v4 h-3 v3 h-4 v-3 h-3 v-4 h3 Z" /></svg>],
  ["画线", <svg width="24" height="24" viewBox="0 0 24 24"><path d="M2 22 L4 16 L16 4 L20 8 L8 20 Z" fill="#f0a028" stroke="#785014" /><path d="M16 4 L19 1 L23 5 L20 8 Z" fill="#e66464" stroke="#8c6464" /><path d="M2 22 L3 18 L6 21 Z" fill="#333" /></svg>],
];
const ICONS_LOW = [
  ["F5", <Tag>F5</Tag>],
  ["刷新", <Frame><path d="M4 11 Q4 4 12 5 L13 3 L18 8 L11 11 V9 Q8 9 8 12 Z M19 11 Q19 19 11 18 L10 20 L5 15 L12 12 V14 Q15 14 15 11 Z" fill="#5abe3c" /></Frame>],
  ..."1 5 15 30 60 日 周 月 N 多 季 年".split(" ").map((t) => [t, t]),
];

const IconGroup = ({ items, height }) => (
  <div className={"flex flex-col " + height}>
    {items.map(([name, icon]) => (
      <button
        key={name}
        aria-label={name}
        className={
          "flex min-h-0 w-full flex-1 items-center justify-center " +
          (name === "日" ? "border-l border-t border-[#a0a0a0] bg-white" : "")
        }
      >
        {icon}
      </button>
    ))}
  </div>
);

const SideBar = () => (
  <nav className="w-[37px] shrink-0 border-l border-[#a0a0a0] bg-[#f0f0f0] text-[17px] leading-none text-[#143c96]">
    <IconGroup items={ICONS_TOP} height="h-[482px]" />
    <hr className="mx-1 my-[5px] border-[#a0a0a0]" />
    <IconGroup items={ICONS_MID} height="h-[174px]" />
    <hr className="mx-1 my-[5px] border-[#a0a0a0]" />
    <IconGroup items={ICONS_LOW} height="h-[483px]" />
  </nav>
);

const INDICES = [
  ["上证", "3167.75", "-1.77", "-0.06%", "2807亿"],
  ["深证", "10810.2", "-6.09", "-0.06%", "4303亿"],
  ["中小", "6990.57", "-32.77", "-0.47%", "410.1亿"],
];

const StatusBar = () => (
  <footer className="flex h-9 items-center whitespace-nowrap border-b border-[#1e3040] bg-[#f0f0f0] text-2xl font-light text-black">
    <svg className="mr-[2px] h-6 w-6" viewBox="0 0 24 24">
      <rect x="1" y="3" width="21" height="19" rx="2" fill="#f0a01e" />
      <rect x="5" y="7" width="13" height="11" fill="#ffe6a0" stroke="#fff" strokeWidth="2" />
      <rect x="8" y="10" width="7" height="5" fill="#f0a01e" />
    </svg>
    {INDICES.map(([name, value, diff, pct, turnover]) => (
      <div key={name} className="mr-6 flex items-center">
        <span className="mr-[5px]">{name}</span>
        <span className="flex gap-[25px] text-[#008200]">
          <Num v={value} />
          <Num v={diff} />
          <Num v={pct} />
        </span>
        <span className="ml-[20px] text-black">
          <Num v={turnover} />
        </span>
      </div>
    ))}
    <div className="-ml-[3px] flex items-center gap-[11px] border-l border-[#a0a0a0] pl-[3px]">
      <span>总成交</span>
      <Num v="7" />
    </div>
  </footer>
);

const Banner = () => (
  <div className="absolute bottom-0 right-0 flex h-[81px] w-[800px] items-center whitespace-nowrap bg-[#80abda]">
    <span className="ml-4 w-[280px] text-[55px] font-black leading-none text-[#190082]">公式指标网</span>
    <svg className="ml-[25px] h-[78px] w-[80px] shrink-0" viewBox="0 0 80 78">
      <path d="M4 38 A36 36 0 0 1 76 38" fill="none" stroke="#dc5a46" strokeWidth="7" />
      <path d="M76 40 A36 35 0 0 1 40 74" fill="none" stroke="#f0d246" strokeWidth="8" />
      <path d="M34 1 h12 l2 8 l-2 6 h8 v22 h-28 v-22 h8 l-2 -6 Z" fill="#f0d246" />
      <circle cx="40" cy="7" r="3" fill="#80abda" />
      <path d="M24 41 h32 v6 h-8 q2 10 12 14 l-8 6 h-24 l-8 -6 q10 -4 12 -14 h-8 Z" fill="#f0d246" />
      <path d="M32 22 h16 M32 30 h7 v7 M48 30 v7 M33 47 v5 h14 v-5 M32 60 l6 -6 M48 60 l-6 -6" fill="none" stroke="#80abda" strokeWidth="3" />
      <path id="logo-rim" d="M4 40 A36 33 0 0 0 40 73" fill="none" />
      <text fontSize="9" fontWeight="bold" fill="#fff">
        <textPath href="#logo-rim">www.9m8.cn</textPath>
      </text>
    </svg>
    <span className="ml-[27px] font-['DejaVu_Serif',serif] text-[51px] font-bold leading-none text-white">www.9m8.cn</span>
  </div>
);

export default function App() {
  return (
    <div className="relative min-h-screen overflow-hidden bg-black font-['Liberation_Sans','Noto_Sans_CJK_SC',sans-serif]">
      <MenuBar />
      <main className="flex">
        <section className="min-w-0 flex-1">
          <PeriodBar />
          <PriceHeader />
          <PriceChart />
          <VolumeHeader />
          <VolumeChart />
          <DateAxis />
          <BottomTabs />
        </section>
        <QuotePanel />
        <SideBar />
      </main>
      <StatusBar />
      <Banner />
    </div>
  );
}
